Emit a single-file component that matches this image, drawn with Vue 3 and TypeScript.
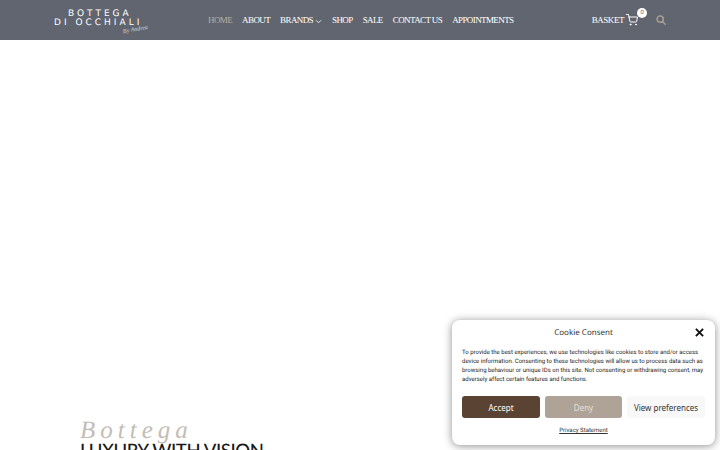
<template>
  <div class="page">
    <header class="site-header">
      <a class="logo">
        <span class="logo-line first">Bottega</span>
        <span class="logo-line second">Di Occhiali</span>
        <span class="logo-by">By Andrea</span>
      </a>
      <nav class="main-nav">
        <a v-for="item in navItems" :key="item.label" class="nav-link" :class="{ active: item.active }">
          {{ item.label }}
          <svg v-if="item.caret" class="caret" viewBox="0 0 8 6" width="7" height="5">
            <path d="M1 1.5 L4 4.5 L7 1.5" fill="none" stroke="currentColor" stroke-width="1" />
          </svg>
        </a>
      </nav>
      <div class="header-tools">
        <a class="basket">
          <span>Basket</span>
          <span class="cart-wrap">
            <svg class="cart" viewBox="0 0 24 24" width="12" height="12" fill="none" stroke="#fff" stroke-width="2" stroke-linecap="round" stroke-linejoin="round">
              <circle cx="9" cy="21" r="1" />
              <circle cx="20" cy="21" r="1" />
              <path d="M1 1h4l2.7 13.4a2 2 0 0 0 2 1.6h9.7a2 2 0 0 0 2-1.6L23 6H6" />
            </svg>
            <span class="badge">0</span>
          </span>
        </a>
        <svg class="search" viewBox="0 0 24 24" width="10" height="10" fill="none" stroke="#a89f94" stroke-width="3.6" stroke-linecap="round">
          <circle cx="10" cy="10" r="7.5" />
          <path d="M16 16 L22 22" />
        </svg>
      </div>
    </header>

    <main class="hero">
      <div class="hero-copy">
        <div class="script">Bottega</div>
        <h1>LUXURY WITH VISION</h1>
      </div>
    </main>

    <aside class="cookie">
      <div class="cookie-head">
        <span class="cookie-title">Cookie Consent</span>
        <svg class="cookie-close" viewBox="0 0 10 10" width="9" height="9">
          <path d="M1 1 L9 9 M9 1 L1 9" stroke="#111" stroke-width="2.1" />
        </svg>
      </div>
      <p class="cookie-text">
        To provide the best experiences, we use technologies like cookies to store and/or access device information. Consenting to these technologies will allow us to process data such as browsing behaviour or unique IDs on this site. Not consenting or withdrawing consent, may adversely affect certain features and functions.
      </p>
      <div class="cookie-actions">
        <button class="btn accept">Accept</button>
        <button class="btn deny">Deny</button>
        <button class="btn prefs">View preferences</button>
      </div>
      <a class="cookie-link">Privacy Statement</a>
    </aside>
  </div>
</template>

<script setup lang="ts">
const navItems = [
  { label: 'Home', active: true },
  { label: 'About' },
  { label: 'Brands', caret: true },
  { label: 'Shop' },
  { label: 'Sale' },
  { label: 'Contact Us' },
  { label: 'Appointments' }
]
</script>

<style>
html,
body {
  margin: 0;
  overflow: hidden;
  background: #fff;
}
</style>

<style scoped>
.page {
  position: relative;
  width: 720px;
  height: 450px;
  overflow: hidden;
  background: #fff;
  font-family: "Liberation Serif", serif;
  text-rendering: geometricPrecision;
}

.site-header {
  display: flex;
  align-items: center;
  height: 40px;
  padding: 0 54px;
  background: #60656f;
  color: #fff;
}

.logo {
  position: relative;
  display: flex;
  flex-direction: column;
  align-items: flex-start;
  width: 154px;
  height: 40px;
  padding-top: 9.5px;
  box-sizing: border-box;
  flex-shrink: 0;
  font-family: "DejaVu Sans", sans-serif;
  text-transform: uppercase;
  line-height: 9px;
  color: #fff;
}

.logo-line {
  white-space: nowrap;
  font-size: 9px;
}

.logo-line.first {
  margin-left: 14px;
  letter-spacing: 3px;
}

.logo-line.second {
  letter-spacing: 3px;
}

.logo-by {
  position: absolute;
  left: 69px;
  top: 27px;
  font-family: "Liberation Serif", serif;
  font-style: italic;
  font-size: 6px;
  line-height: 7px;
  text-transform: none;
  color: #d8d8d8;
  transform: rotate(-10deg);
}

.main-nav {
  display: flex;
  align-items: center;
  gap: 10px;
}

.nav-link {
  display: flex;
  align-items: center;
  gap: 1px;
  font-size: 9px;
  line-height: 14px;
  letter-spacing: -0.6px;
  text-transform: uppercase;
  white-space: nowrap;
  color: #fff;
}

.nav-link.active {
  color: #b5aca0;
}

.caret {
  margin-left: 1px;
  margin-top: 2px;
}

.header-tools {
  display: flex;
  align-items: center;
  gap: 9px;
  margin-left: auto;
}

.basket {
  display: flex;
  align-items: center;
  gap: 2px;
  font-size: 9px;
  letter-spacing: -0.45px;
  text-transform: uppercase;
  color: #fff;
}

.cart-wrap {
  position: relative;
  display: flex;
  width: 12px;
  margin-right: 9px;
}

.badge {
  position: absolute;
  left: 11px;
  top: -6px;
  width: 10px;
  height: 10px;
  border-radius: 50%;
  background: #fff;
  color: #60656f;
  font-family: "Liberation Sans", sans-serif;
  font-size: 6px;
  line-height: 10px;
  text-align: center;
}

.hero {
  display: flex;
  flex-direction: column;
  justify-content: flex-end;
  height: 410px;
  padding-left: 80px;
}

.hero-copy {
  height: 32px;
}

.script {
  font-family: "Liberation Serif", serif;
  font-style: italic;
  font-size: 25px;
  line-height: 26px;
  margin-bottom: -6px;
  letter-spacing: 5px;
  color: #c3bdb6;
}

h1 {
  margin: 0;
  font-family: Lato, sans-serif;
  font-weight: 500;
  font-size: 18.5px;
  line-height: 24px;
  letter-spacing: -0.4px;
  color: #1a1a1a;
  white-space: nowrap;
}

.cookie {
  position: absolute;
  left: 452px;
  top: 320px;
  width: 263px;
  height: 125px;
  box-sizing: border-box;
  padding: 0 10px;
  background: #fff;
  border-radius: 8px;
  box-shadow: 0 1px 8px rgba(0, 0, 0, 0.45);
  font-family: Roboto, sans-serif;
  color: #222;
}

.cookie-head {
  position: relative;
  display: flex;
  justify-content: center;
  align-items: center;
  height: 24px;
}

.cookie-title {
  font-family: "Noto Sans", sans-serif;
  font-size: 8px;
  color: #333;
}

.cookie-close {
  position: absolute;
  right: 1px;
  top: 8px;
}

.cookie-text {
  margin: 4px 0 0;
  font-size: 6px;
  line-height: 9.1px;
  color: #222;
}

.cookie-actions {
  display: flex;
  gap: 5px;
  margin-top: 12px;
}

.btn {
  height: 22px;
  padding: 0;
  border: 0;
  border-radius: 3px;
  font-family: "Noto Sans", sans-serif;
  font-size: 8px;
}

.accept {
  width: 78px;
  background: #5a4333;
  color: #fff;
}

.deny {
  width: 77px;
  background: #aea396;
  color: #e6e1da;
}

.prefs {
  width: 78px;
  background: #f8f8f8;
  color: #333;
}

.cookie-link {
  display: block;
  margin-top: 9px;
  text-align: center;
  font-size: 6px;
  line-height: 8px;
  color: #333;
  text-decoration: underline;
}
</style>
